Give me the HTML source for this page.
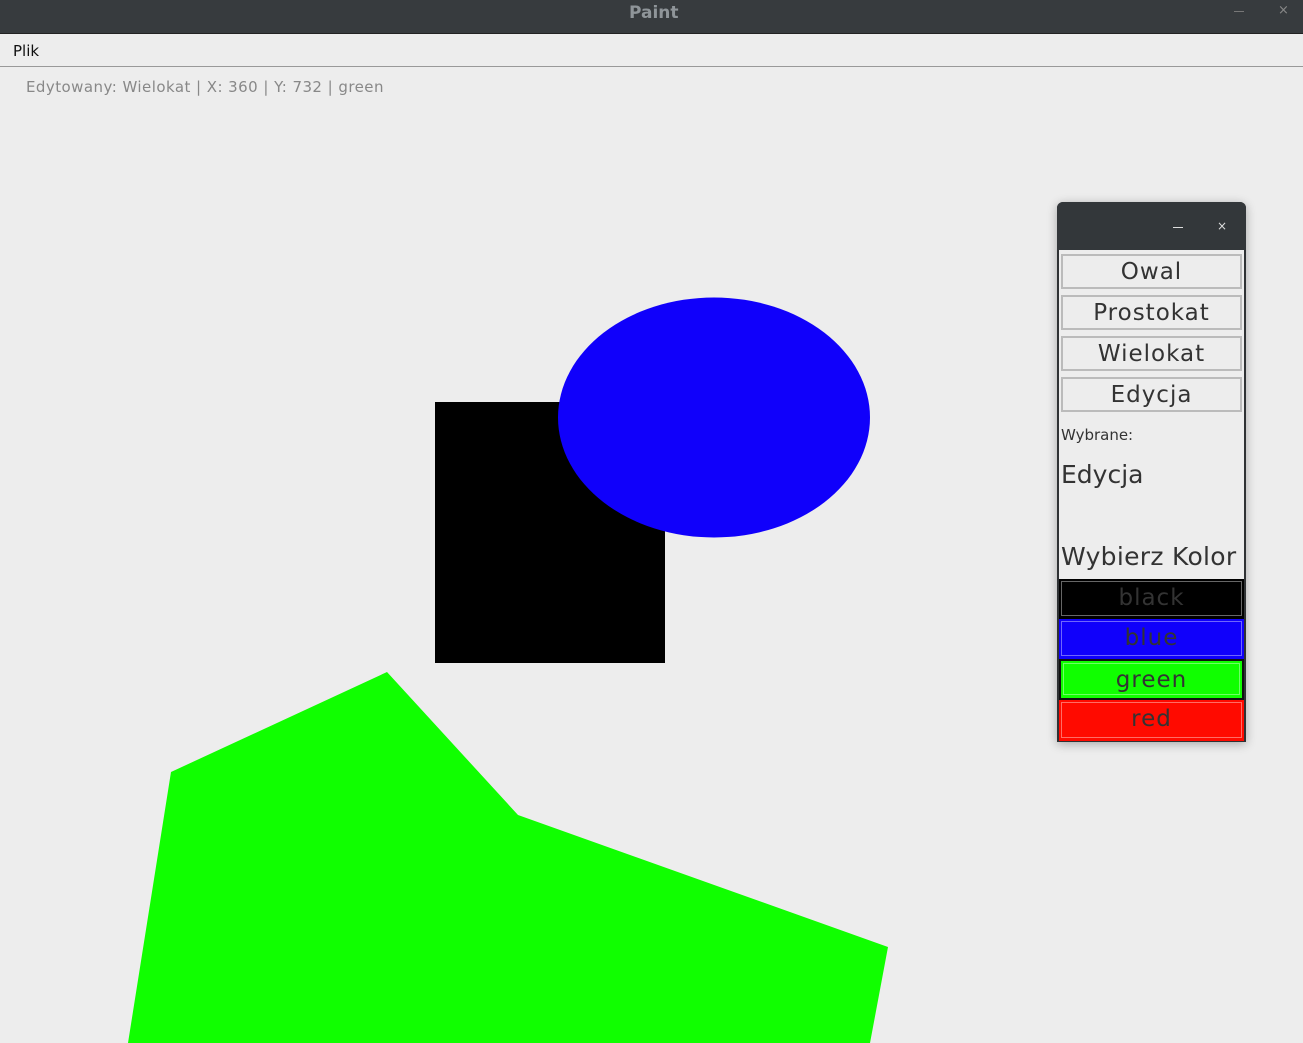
<!DOCTYPE html>
<html><head><meta charset="utf-8"><style>
*{margin:0;padding:0;box-sizing:border-box}
body{width:1303px;height:1043px;background:#ededed;position:relative;overflow:hidden;font-family:"DejaVu Sans","Liberation Sans",sans-serif}
.abs{position:absolute}
#title{left:0;top:0;width:1303px;height:34px;background:#373b3e;border-bottom:1px solid #222}
#menu{left:0;top:35px;width:1303px;height:32px;background:#ededed;border-bottom:1px solid #999}
.btn{position:absolute;left:1061px;width:181px;height:35px;border:2px solid #bbb;background:#ededed;color:#333;font-size:23px;letter-spacing:1px;text-align:center;line-height:33px}
.cb{position:absolute;left:1059px;width:185px;color:#333;font-size:23px;letter-spacing:1px;text-align:center;line-height:38px}
.cb span{position:absolute;left:2px;top:2px;right:2px;bottom:3px;border:1px solid rgba(255,255,255,.4)}
</style></head><body>
<div id="title" class="abs"></div>
<div class="abs" style="left:629px;top:3px;color:#8f9599;font-weight:bold;font-size:17px">Paint</div>
<div class="abs" style="left:1234px;top:11px;width:10px;height:1px;background:#777"></div>
<div class="abs" style="left:1278px;top:3px;color:#888;font-size:13px">×</div>
<div id="menu" class="abs"></div>
<div class="abs" style="left:13px;top:42px;font-size:15px;color:#111">Plik</div>
<div class="abs" style="left:26px;top:78px;font-size:15px;color:#888;letter-spacing:0.45px">Edytowany: Wielokat | X: 360 | Y: 732 | green</div>
<svg class="abs" style="left:0;top:0" width="1303" height="1043">
<rect x="435" y="402" width="230" height="261" fill="#000"/>
<ellipse cx="714" cy="417.5" rx="156" ry="120" fill="#1000fb"/>
<polygon points="387,672 171,772 128,1043 870,1043 888,947 518,815" fill="#10ff00"/>
</svg>
<div class="abs" style="left:1057px;top:202px;width:189px;height:540px;background:#ededed;border:2px solid #2f3234;border-radius:6px 6px 0 0;box-shadow:0 2px 10px rgba(0,0,0,.3)"></div>
<div class="abs" style="left:1057px;top:202px;width:189px;height:48px;background:#33373a;border-radius:6px 6px 0 0"></div>
<div class="abs" style="left:1173px;top:227px;width:10px;height:1px;background:#ddd"></div>
<div class="abs" style="left:1217px;top:219px;color:#ddd;font-size:12px">×</div>
<div class="btn" style="top:254px">Owal</div>
<div class="btn" style="top:295px">Prostokat</div>
<div class="btn" style="top:336px">Wielokat</div>
<div class="btn" style="top:377px">Edycja</div>
<div class="abs" style="left:1061px;top:426px;font-size:15px;color:#333">Wybrane:</div>
<div class="abs" style="left:1061px;top:460px;font-size:25px;color:#333">Edycja</div>
<div class="abs" style="left:1061px;top:542px;font-size:25px;color:#333;letter-spacing:0.3px">Wybierz Kolor</div>
<div class="cb" style="top:579px;height:40px;background:#000"><span style="border-color:#666"></span>black</div>
<div class="cb" style="top:619px;height:40px;background:#1000fb"><span></span>blue</div>
<div class="cb" style="top:659px;height:41px;background:#10ff00;border:2px solid #111"><span></span>green</div>
<div class="cb" style="top:700px;height:41px;background:#ff0a00"><span></span>red</div>
</body></html>
